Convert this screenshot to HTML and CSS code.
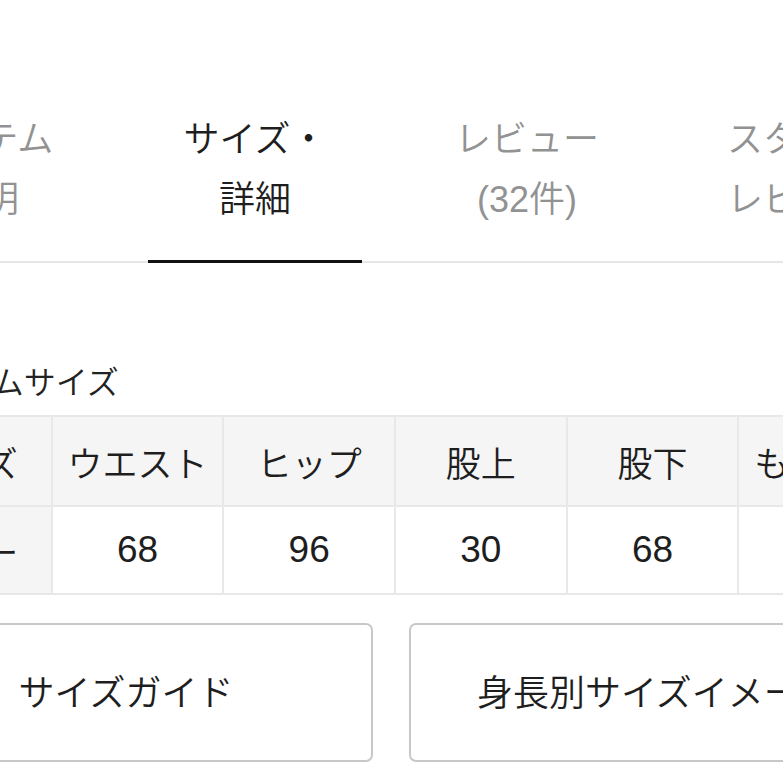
FILE: index.html
```html
<!DOCTYPE html>
<html lang="ja">
<head>
<meta charset="utf-8">
<link rel="stylesheet" href="styles.css">
</head>
<body>
<nav class="tabs">
  <div class="tab">アイテム<br>説明</div>
  <div class="tab active">サイズ・<br>詳細</div>
  <div class="tab">レビュー<br>(32件)</div>
  <div class="tab">スタッフ<br>レビュー</div>
</nav>
<main class="content">
  <h2 class="title">アイテムサイズ</h2>
  <table class="size-table">
    <tr>
      <th>サイズ</th><th>ウエスト</th><th>ヒップ</th><th>股上</th><th>股下</th><th>もも周り</th>
    </tr>
    <tr>
      <th>フリー</th><td>68</td><td>96</td><td>30</td><td>68</td><td>64</td>
    </tr>
  </table>
  <div class="buttons">
    <button class="btn">サイズガイド</button>
    <button class="btn">身長別サイズイメージ</button>
  </div>
</main>
</body>
</html>
```
FILE: styles.css
```css
html, body {
  margin: 0;
  overflow: hidden;
  background: #fff;
}
body {
  width: 783px;
  height: 783px;
  font-family: "Liberation Sans", "Noto Sans CJK JP", sans-serif;
  font-weight: 350;
  color: #222;
}
.tabs {
  display: flex;
  margin-left: -153px;
  width: 1200px;
  padding-top: 110px;
  border-bottom: 2px solid #e6e6e6;
}
.tab {
  flex: none;
  width: 272px;
  text-align: center;
  font-size: 36px;
  line-height: 60px;
  color: #929292;
  padding-bottom: 31px;
  position: relative;
}
.tab.active {
  color: #1e1e1e;
}
.tab.active::after {
  content: "";
  position: absolute;
  left: 29px;
  right: 29px;
  bottom: -2px;
  height: 3px;
  background: #111;
}
.content {
  margin-left: -121px;
  width: 1032px;
}
.title {
  font-size: 32px;
  font-weight: 350;
  line-height: 40px;
  margin: 100px 0 12px 20px;
}
.size-table {
  border-collapse: collapse;
  table-layout: fixed;
  width: 1032px;
}
.size-table th,
.size-table td {
  border: 2px solid #e8e8e8;
  font-size: 35px;
  font-weight: 350;
  text-align: center;
  padding: 0;
  color: #1e1e1e;
}
.size-table td {
  font-size: 37px;
  background: #fff;
}
.size-table th {
  background: #f5f5f5;
}
.size-table tr:first-child {
  height: 90px;
}
.size-table tr:last-child {
  height: 88px;
}
.buttons {
  display: grid;
  grid-template-columns: 494px 494px;
  gap: 36px;
  margin-top: 28px;
}
.btn {
  height: 139px;
  border: 2px solid #c8c8c8;
  border-radius: 7px;
  background: #fff;
  font-family: inherit;
  font-weight: 350;
  font-size: 36px;
  color: #1e1e1e;
  padding: 0 0 6px;
  white-space: nowrap;
  overflow: hidden;
}
```
